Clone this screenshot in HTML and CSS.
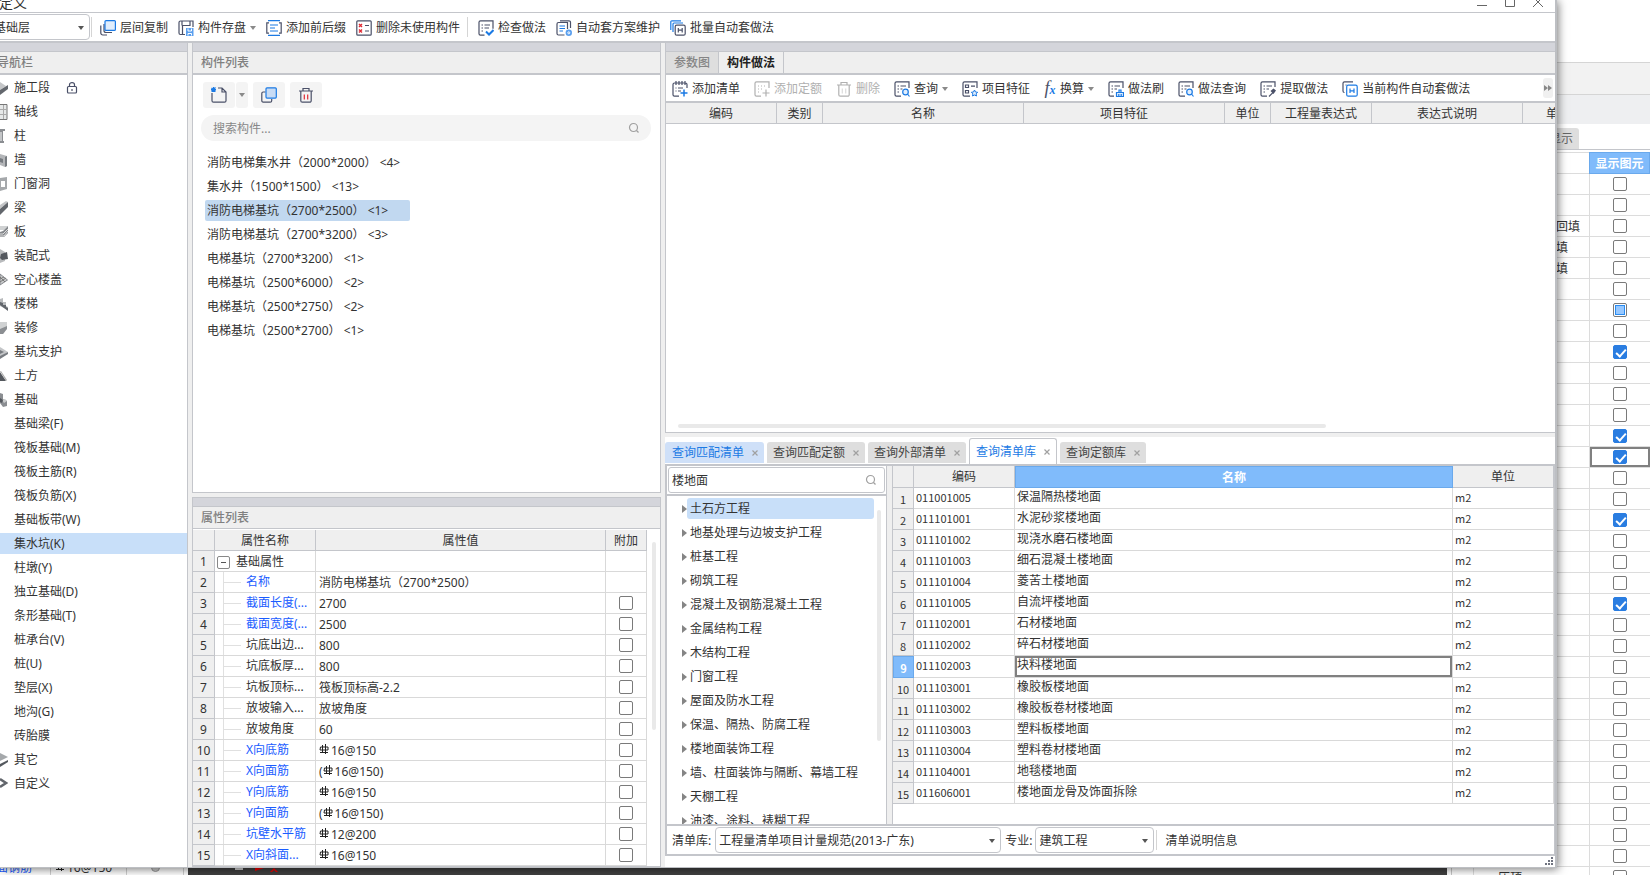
FILE: index.html
```html
<!DOCTYPE html>
<html lang="zh-CN">
<head>
<meta charset="utf-8">
<title>定义</title>
<link rel="stylesheet" href="styles.css">
</head>
<body>
<svg class="sprite" aria-hidden="true">
  <symbol id="i-layers" viewBox="0 0 16 16"><path class="d" d="M4 4v6.500a2 2 0 0 0 2 2h6M.8 5.500v7.500a2 2 0 0 0 2 2H7"/><rect class="b lf" x="5" y=".6" width="10.400" height="9.800" rx="1"/></symbol>
  <symbol id="i-save" viewBox="0 0 16 16"><path class="d" d="M7 14.500H2.500a1.500 1.500 0 0 1-1.500-1.500V2.500A1.500 1.500 0 0 1 2.500 1H15v6M4 1v4.500M4.500 5.500h7.500V1M4.500 5.500V14"/><path class="bf" d="M8 8h7.500v8H8z"/><path class="w" d="M10 8.500v2.500h3.500V8.500M10 15.500v-2h3.500v2"/></symbol>
  <symbol id="i-prefix" viewBox="0 0 16 16"><path class="b" d="M2 .6h12M2 15.400h12M4 5h8M4 8h5M4 11h8"/><path class="d" d="M3 2.800H.8v10.400H3M13 2.800h2.200v10.400H13"/></symbol>
  <symbol id="i-purge" viewBox="0 0 16 16"><rect class="d" x=".8" y=".8" width="14.400" height="14.400" rx="1"/><path class="r" d="M3 4l3 3M6 4L3 7M3 9.500l3 3M6 9.500l-3 3"/><path class="d" d="M9 5.500h4M9 11h4"/></symbol>
  <symbol id="i-check" viewBox="0 0 16 16"><path class="d" d="M6.500 15.200H2.500a1.500 1.500 0 0 1-1.500-1.500V2.300A1.500 1.500 0 0 1 2.500.8H15v8M3.500 5h1.500M6.500 5H12M3.500 8h1.500M6.500 8H11M3.500 11h1.500"/><path class="b2" d="M8 11.500l3 3 4.500-4.500"/></symbol>
  <symbol id="i-scheme" viewBox="0 0 16 16"><path class="d" d="M8.500 15H2.500a1.500 1.500 0 0 1-1.500-1.500V4a1.500 1.500 0 0 1 1.500-1.500H11.500V9M4 .8h9a1.500 1.500 0 0 1 1.500 1.500V8"/><path class="b" d="M3.500 6h5.500M3.500 8.500h5.500M3.500 11h3.500"/><circle class="bf" cx="12.800" cy="12.800" r="3.200"/><circle class="w" cx="12.800" cy="12.800" r="1"/></symbol>
  <symbol id="i-batch" viewBox="0 0 16 16"><path class="b" d="M.8 10V1.800a1 1 0 0 1 1-1H11M3 12V4a1 1 0 0 1 1-1h9"/><rect class="d" x="5.200" y="5.200" width="10" height="10" rx="1.500"/><path class="d" d="M8.300 8v4.500M12.200 8v4.500M8.300 10.200h4"/></symbol>
  <symbol id="i-auto" viewBox="0 0 16 16"><path class="d" d="M2.500 11.500a1.500 1.500 0 0 1-1.500-1.500V2.300A1.500 1.500 0 0 1 2.500.8H11M3.500 4h1"/><rect class="b" x="4.700" y="4.200" width="10.500" height="11" rx="1.500"/><path class="b" d="M8 7.500v4.500M12 7.500v4.500M8 9.800h4"/></symbol>
  <symbol id="i-addlist" viewBox="0 0 16 16"><path class="c" d="M7 15.200H2.500a1.500 1.500 0 0 1-1.500-1.500V3.500A1.500 1.500 0 0 1 2.500 2H13.500A1.500 1.500 0 0 1 15 3.500V7M4 0v4M7 0v4M10 0v4M13 0v4M3.500 7h1M6 7h5M3.500 10h1M6 10h3"/><path class="plus" d="M8.500 12h7M12 8.500v7"/></symbol>
  <symbol id="i-addquota" viewBox="0 0 16 16"><path class="c" d="M7 15.200H2.500a1.500 1.500 0 0 1-1.500-1.500V2.300A1.500 1.500 0 0 1 2.500.8H15V7M4 5h1M7 5h1M10 5h1M4 8h1M7 8h1M4 11h1M8.500 12h7M12 8.500v7"/></symbol>
  <symbol id="i-trash" viewBox="0 0 16 16"><path class="c" d="M1 4h14M5 4V1.500h6V4M2.800 4v9.700a1.500 1.500 0 0 0 1.500 1.500h7.400a1.500 1.500 0 0 0 1.500-1.500V4"/><path class="bar" d="M6.300 7.500v5M9.700 7.500v5"/></symbol>
  <symbol id="i-query" viewBox="0 0 16 16"><path class="d" d="M7 15.200H2.500a1.500 1.500 0 0 1-1.500-1.500V2.300A1.500 1.500 0 0 1 2.500.8H15V7M3.500 5h1.500M6.500 5H12M3.500 8h1.500M6.500 8H8.500M3.500 11h1.500"/><circle class="b lf" cx="11.500" cy="11" r="2.800"/><path class="b" d="M13.500 13l2 2.500"/></symbol>
  <symbol id="i-feature" viewBox="0 0 16 16"><path class="d" d="M8 15.200H2.500a1.500 1.500 0 0 1-1.500-1.500V2.300A1.500 1.500 0 0 1 2.500.8H15V7M3.500 4h3v2.500h-3zM3.500 9.500h3V12h-3zM9 5.200h4"/><path class="b lf thin" d="M12.500 9l1 2 2.200.3-1.600 1.500.4 2.200-2-1-2 1 .4-2.200-1.600-1.500 2.200-.3z"/></symbol>
  <symbol id="i-brush" viewBox="0 0 16 16"><path class="d" d="M6 15.200H2.500a1.500 1.500 0 0 1-1.500-1.500V2.300A1.500 1.500 0 0 1 2.500.8H15V7M3.500 5h1.500M6.500 5H12M3.500 8h1.500M6.500 8H9M3.500 11h1.500"/><path class="b lf" d="M8.500 15.500v-4h7v4zM11 11.500V9h2v2.500M10.800 15v-2M13.200 15v-2"/></symbol>
  <symbol id="i-pick" viewBox="0 0 16 16"><path class="d" d="M7 15.200H2.500a1.500 1.500 0 0 1-1.500-1.500V2.300A1.500 1.500 0 0 1 2.500.8H15V6M3.500 5h1.500M6.500 5H12M3.500 8h1.500M6.500 8H9M3.500 11h1.500M9 15.500l4-4"/><path class="df" d="M10.500 10l3-2.500 2.500 2-2.500 3.500z"/></symbol>
  <symbol id="i-new" viewBox="0 0 16 16"><path class="d" d="M1 6v7.700a1.500 1.500 0 0 0 1.500 1.500h11a1.500 1.500 0 0 0 1.500-1.500V5l-4-4H7M11 1v4h4"/><path class="b" d="M.5 1l4 3.500M4.500.5l-4 4M2.500 0v5M0 2.700h5"/></symbol>
  <symbol id="i-dup" viewBox="0 0 16 16"><path class="d" d="M4.500 5H2.200A1.500 1.500 0 0 0 .8 6.500v7a1.500 1.500 0 0 0 1.400 1.700h7a1.500 1.500 0 0 0 1.500-1.500V12"/><rect class="b mf" x="5" y=".8" width="10.300" height="10.300" rx="1"/></symbol>
  <symbol id="i-search" viewBox="0 0 12 12"><circle class="g" cx="5.500" cy="5.500" r="4"/><path class="g" d="M8.500 8.500l2 2"/></symbol>
  <symbol id="i-lock" viewBox="0 0 12 12"><rect class="d" x="1.500" y="4.500" width="9" height="6.500" rx="1"/><path class="d" d="M3.500 4.500V2.700a2.500 2 0 0 1 5 0v1.800M6 7v2"/></symbol>
  <symbol id="i-rebar" viewBox="0 0 10 11"><path class="k" d="M3.500 1v8M6.500 0v10M1 8.500h8M1.500 3h7.500v3H1z"/></symbol>
  <symbol id="i-x" viewBox="0 0 6 6"><path class="g" d="M.5.5l5 5M5.500.5l-5 5"/></symbol>
</svg>

<div class="app">
  <div class="workspace">
    <div class="dock">
      <div class="dock-name">面钢筋</div>
      <div class="dock-value"><svg class="rebar"><use href="#i-rebar"/></svg>16@150</div>
      <div class="dock-extra"><i></i></div>
    </div>
    <div class="canvas">
      <svg width="60" height="7" viewBox="0 0 60 7"><path fill="#ccc" d="M6 0h8v2H6z"/><path fill="#e00" d="M26 0h9l-9 3zM41 4l4-4 4 4h-2l-2-2-2 2z"/></svg>
    </div>
  </div>
  <aside class="side">
    <div class="side-top"></div>
    <div class="side-bar"></div>
    <div class="side-band"></div>
    <div class="side-tabs"><button type="button">显示</button></div>
    <table class="show-table">
      <colgroup><col><col class="c-show"></colgroup>
      <thead><tr><th></th><th class="hot">显示图元</th></tr></thead>
      <tbody>
        <tr><td></td><td><input type="checkbox" aria-label="显示图元 1"></td></tr>
        <tr><td></td><td><input type="checkbox" aria-label="显示图元 2"></td></tr>
        <tr><td class="t1">回填</td><td><input type="checkbox" aria-label="显示图元 3"></td></tr>
        <tr><td class="t2">填</td><td><input type="checkbox" aria-label="显示图元 4"></td></tr>
        <tr><td class="t2">填</td><td><input type="checkbox" aria-label="显示图元 5"></td></tr>
        <tr><td></td><td><input type="checkbox" aria-label="显示图元 6"></td></tr>
        <tr><td></td><td><input type="checkbox" class="partial" aria-label="显示图元 7"></td></tr>
        <tr><td></td><td><input type="checkbox" aria-label="显示图元 8"></td></tr>
        <tr><td></td><td><input type="checkbox" checked aria-label="显示图元 9"></td></tr>
        <tr><td></td><td><input type="checkbox" aria-label="显示图元 10"></td></tr>
        <tr><td></td><td><input type="checkbox" aria-label="显示图元 11"></td></tr>
        <tr><td></td><td><input type="checkbox" aria-label="显示图元 12"></td></tr>
        <tr><td></td><td><input type="checkbox" checked aria-label="显示图元 13"></td></tr>
        <tr><td></td><td class="focus"><input type="checkbox" checked aria-label="显示图元 14"></td></tr>
        <tr><td></td><td><input type="checkbox" aria-label="显示图元 15"></td></tr>
        <tr><td></td><td><input type="checkbox" aria-label="显示图元 16"></td></tr>
        <tr><td></td><td><input type="checkbox" checked aria-label="显示图元 17"></td></tr>
        <tr><td></td><td><input type="checkbox" aria-label="显示图元 18"></td></tr>
        <tr><td></td><td><input type="checkbox" aria-label="显示图元 19"></td></tr>
        <tr><td></td><td><input type="checkbox" aria-label="显示图元 20"></td></tr>
        <tr><td></td><td><input type="checkbox" checked aria-label="显示图元 21"></td></tr>
        <tr><td></td><td><input type="checkbox" aria-label="显示图元 22"></td></tr>
        <tr><td></td><td><input type="checkbox" aria-label="显示图元 23"></td></tr>
        <tr><td></td><td><input type="checkbox" aria-label="显示图元 24"></td></tr>
        <tr><td></td><td><input type="checkbox" aria-label="显示图元 25"></td></tr>
        <tr><td></td><td><input type="checkbox" aria-label="显示图元 26"></td></tr>
        <tr><td></td><td><input type="checkbox" aria-label="显示图元 27"></td></tr>
        <tr><td></td><td><input type="checkbox" aria-label="显示图元 28"></td></tr>
        <tr><td></td><td><input type="checkbox" aria-label="显示图元 29"></td></tr>
        <tr><td></td><td><input type="checkbox" aria-label="显示图元 30"></td></tr>
        <tr><td></td><td><input type="checkbox" aria-label="显示图元 31"></td></tr>
        <tr><td></td><td><input type="checkbox" aria-label="显示图元 32"></td></tr>
        <tr><td></td><td><input type="checkbox" aria-label="显示图元 33"></td></tr>
        <tr><td class="t3">压顶</td><td><input type="checkbox" aria-label="显示图元 34"></td></tr>
      </tbody>
    </table>
  </aside>
</div>

<main class="dialog">
  <header class="titlebar">
    <div class="title-row">
      <span class="title">定义</span>
      <div class="win-btns">
        <button type="button" aria-label="最小化"><svg width="10" height="10"><path class="wb" d="M0 8.500h10"/></svg></button>
        <button type="button" aria-label="最大化"><svg width="10" height="10"><path class="wb" d="M.5.5h9v9h-9z"/></svg></button>
        <button type="button" aria-label="关闭"><svg width="10" height="10"><path class="wb" d="M0 0l10 10M10 0L0 10"/></svg></button>
      </div>
    </div>
  </header>

  <div class="toolbar main-tools">
    <div class="select floor"><select aria-label="楼层"><option>基础层</option></select></div>
    <i class="sep"></i>
    <button type="button"><svg class="ic"><use href="#i-layers"/></svg>层间复制</button>
    <button type="button"><svg class="ic"><use href="#i-save"/></svg>构件存盘<i class="caret"></i></button>
    <button type="button"><svg class="ic"><use href="#i-prefix"/></svg>添加前后缀</button>
    <button type="button"><svg class="ic"><use href="#i-purge"/></svg>删除未使用构件</button>
    <i class="sep mid"></i>
    <button type="button"><svg class="ic"><use href="#i-check"/></svg>检查做法</button>
    <button type="button"><svg class="ic"><use href="#i-scheme"/></svg>自动套方案维护</button>
    <button type="button"><svg class="ic"><use href="#i-batch"/></svg>批量自动套做法</button>
  </div>

  <div class="panes">
    <nav class="panel nav">
      <div class="strip"></div>
      <h2 class="head">导航栏</h2>
      <ul class="nav-list">
        <li><a href="#"><svg class="ni" viewBox="0 0 8 16"><path fill="#c4c6c8" d="M0 2l6 4-6 4z"/><path fill="#63676d" d="M0 10l8-5v4l-8 6z"/></svg>施工段<svg class="lock"><use href="#i-lock"/></svg></a></li>
        <li><a href="#"><svg class="ni" viewBox="0 0 8 16"><path fill="#e6e8e8" stroke="#777" d="M-1 .5h8v15h-8z"/><path stroke="#aaa" d="M3.500 1v14M0 5.500h7M0 10.500h7"/></svg>轴线</a></li>
        <li><a href="#"><svg class="ni" viewBox="0 0 8 16"><path fill="#8b8e92" d="M0 1h5v2H3v10h1v2H0z"/><path fill="#c4c6c8" d="M0 4h2v9H0z"/></svg>柱</a></li>
        <li><a href="#"><svg class="ni" viewBox="0 0 8 16"><path fill="#b4b6b9" d="M0 2l7 2v10l-2 1-5-2z"/><path fill="#777b80" d="M5 5l2-1v10l-2 1zM0 6l3 1v4l-3-1z"/></svg>墙</a></li>
        <li><a href="#"><svg class="ni" viewBox="0 0 8 16"><path fill="#a5a8ab" d="M0 2l7-1v12l-7 2z"/><path fill="#fff" d="M1 5h4v6H1z"/></svg>门窗洞</a></li>
        <li><a href="#"><svg class="ni" viewBox="0 0 8 16"><path fill="#c4c6c8" d="M0 5l6-4 2 1-8 7z"/><path fill="#62666c" d="M0 9l8-7v5l-8 8z"/></svg>梁</a></li>
        <li><a href="#"><svg class="ni" viewBox="0 0 8 16"><path fill="#d0d2d3" d="M0 2h8L4 6H0z"/><path fill="#85888c" d="M0 8l3-1 5-5v7l-4 4H0z"/><path stroke="#ddd" fill="none" d="M0 10h3l5-5M0 12h4l4-5"/></svg>板</a></li>
        <li><a href="#"><svg class="ni" viewBox="0 0 8 16"><path fill="#b9bbbd" d="M0 1l5 3v9l-5 2z"/><path fill="#54585e" d="M1 6l6-2 1 7-6 1-2-2z"/></svg>装配式</a></li>
        <li><a href="#"><svg class="ni" viewBox="0 0 8 16"><path fill="#c9cbcc" stroke="#85888c" d="M0 2l7.500 6L0 13z"/><path stroke="#777" d="M0 7l4-2M0 10l6-4M0 5l5 5"/></svg>空心楼盖</a></li>
        <li><a href="#"><svg class="ni" viewBox="0 0 8 16"><path fill="#b9bbbd" d="M0 3l3-1v4l3 0v4l2 1v3l-8-4z"/><path fill="#62666c" d="M0 6l3 1v2l3 0v2l2 1v3L0 9z"/></svg>楼梯</a></li>
        <li><a href="#"><svg class="ni" viewBox="0 0 8 16"><path fill="#d0d2d3" d="M0 2h7v6l-4 6H0z"/><path fill="#8b8e92" d="M0 9l7-3v3l-4 5H0z"/></svg>装修</a></li>
        <li><a href="#"><svg class="ni" viewBox="0 0 8 16"><path fill="#c4c6c8" d="M0 3l8 5-8 5z"/><path fill="#777b80" d="M0 6l4 2-4 2zM0 12l8-4v2l-8 5z"/></svg>基坑支护</a></li>
        <li><a href="#"><svg class="ni" viewBox="0 0 8 16"><path fill="#54585e" d="M0 4l6 9H0z"/><path fill="#aaa" d="M0 3l1 0 6 9-1 1z"/></svg>土方</a></li>
        <li><a href="#"><svg class="ni" viewBox="0 0 8 16"><path fill="#8b8e92" d="M0 1l3 1v5l4 2v5l-4 1-3-4z"/><path fill="#c9cbcc" d="M2 8l3-1 2 2-3 2z"/><path fill="#54585e" d="M0 6l3 2-1 3-2-1z"/></svg>基础</a></li>
        <li><a href="#">基础梁(F)</a></li>
        <li><a href="#">筏板基础(M)</a></li>
        <li><a href="#">筏板主筋(R)</a></li>
        <li><a href="#">筏板负筋(X)</a></li>
        <li><a href="#">基础板带(W)</a></li>
        <li><a href="#" class="on" aria-current="page">集水坑(K)</a></li>
        <li><a href="#">柱墩(Y)</a></li>
        <li><a href="#">独立基础(D)</a></li>
        <li><a href="#">条形基础(T)</a></li>
        <li><a href="#">桩承台(V)</a></li>
        <li><a href="#">桩(U)</a></li>
        <li><a href="#">垫层(X)</a></li>
        <li><a href="#">地沟(G)</a></li>
        <li><a href="#">砖胎膜</a></li>
        <li><a href="#"><svg class="ni" viewBox="0 0 8 16"><path fill="#a5a8ab" d="M0 1l8 4-8 4z"/><path fill="#54585e" d="M0 12l8-4v2l-8 5z"/></svg>其它</a></li>
        <li><a href="#"><svg class="ni" viewBox="0 0 8 16"><path fill="none" stroke="#62666c" stroke-width="2.500" d="M0 3l6 4-6 4"/></svg>自定义</a></li>
      </ul>
    </nav>

    <div class="middle">
      <section class="panel comp">
        <div class="strip"></div>
        <h2 class="head">构件列表</h2>
        <div class="comp-tools">
          <div class="split">
            <button type="button" aria-label="新建"><svg class="ic"><use href="#i-new"/></svg></button>
            <button type="button" class="drop" aria-label="新建选项"><i class="caret"></i></button>
          </div>
          <button type="button" aria-label="复制"><svg class="ic"><use href="#i-dup"/></svg></button>
          <button type="button" aria-label="删除"><svg class="ic red"><use href="#i-trash"/></svg></button>
        </div>
        <label class="search pill"><input type="text" placeholder="搜索构件..." aria-label="搜索构件"><svg class="mag"><use href="#i-search"/></svg></label>
        <ul class="comp-list">
          <li>消防电梯集水井（2000*2000） &lt;4&gt;</li>
          <li>集水井（1500*1500） &lt;13&gt;</li>
          <li class="on">消防电梯基坑（2700*2500） &lt;1&gt;</li>
          <li>消防电梯基坑（2700*3200） &lt;3&gt;</li>
          <li>电梯基坑（2700*3200） &lt;1&gt;</li>
          <li>电梯基坑（2500*6000） &lt;2&gt;</li>
          <li>电梯基坑（2500*2750） &lt;2&gt;</li>
          <li>电梯基坑（2500*2700） &lt;1&gt;</li>
        </ul>
      </section>

      <section class="panel props">
        <div class="strip lined"></div>
        <h2 class="head thin">属性列表</h2>
        <div class="props-body">
          <table class="grid prop-table">
            <colgroup><col class="c-no"><col class="c-name"><col><col class="c-add"></colgroup>
            <thead><tr><th></th><th>属性名称</th><th>属性值</th><th>附加</th></tr></thead>
            <tbody>
              <tr><th>1</th><td class="group"><button type="button" aria-label="折叠"></button>基础属性</td><td></td><td></td></tr>
              <tr><th>2</th><td class="leaf blue">名称</td><td>消防电梯基坑（2700*2500）</td><td></td></tr>
              <tr><th>3</th><td class="leaf blue">截面长度(...</td><td>2700</td><td><input type="checkbox" aria-label="附加 3"></td></tr>
              <tr><th>4</th><td class="leaf blue">截面宽度(...</td><td>2500</td><td><input type="checkbox" aria-label="附加 4"></td></tr>
              <tr><th>5</th><td class="leaf">坑底出边...</td><td>800</td><td><input type="checkbox" aria-label="附加 5"></td></tr>
              <tr><th>6</th><td class="leaf">坑底板厚...</td><td>800</td><td><input type="checkbox" aria-label="附加 6"></td></tr>
              <tr><th>7</th><td class="leaf">坑板顶标...</td><td>筏板顶标高-2.2</td><td><input type="checkbox" aria-label="附加 7"></td></tr>
              <tr><th>8</th><td class="leaf">放坡输入...</td><td>放坡角度</td><td><input type="checkbox" aria-label="附加 8"></td></tr>
              <tr><th>9</th><td class="leaf">放坡角度</td><td>60</td><td><input type="checkbox" aria-label="附加 9"></td></tr>
              <tr><th>10</th><td class="leaf blue">X向底筋</td><td><svg class="rebar"><use href="#i-rebar"/></svg>16@150</td><td><input type="checkbox" aria-label="附加 10"></td></tr>
              <tr><th>11</th><td class="leaf blue">X向面筋</td><td>(<svg class="rebar"><use href="#i-rebar"/></svg>16@150)</td><td><input type="checkbox" aria-label="附加 11"></td></tr>
              <tr><th>12</th><td class="leaf blue">Y向底筋</td><td><svg class="rebar"><use href="#i-rebar"/></svg>16@150</td><td><input type="checkbox" aria-label="附加 12"></td></tr>
              <tr><th>13</th><td class="leaf blue">Y向面筋</td><td>(<svg class="rebar"><use href="#i-rebar"/></svg>16@150)</td><td><input type="checkbox" aria-label="附加 13"></td></tr>
              <tr><th>14</th><td class="leaf blue">坑壁水平筋</td><td><svg class="rebar"><use href="#i-rebar"/></svg>12@200</td><td><input type="checkbox" aria-label="附加 14"></td></tr>
              <tr><th>15</th><td class="leaf blue">X向斜面...</td><td><svg class="rebar"><use href="#i-rebar"/></svg>16@150</td><td><input type="checkbox" aria-label="附加 15"></td></tr>
            </tbody>
          </table>
          <div class="track"><i></i></div>
        </div>
      </section>
    </div>

    <div class="right">
      <section class="panel method">
        <div class="strip"></div>
        <div class="head tabs-top">
          <button type="button">参数图</button><button type="button" class="on">构件做法</button>
        </div>
        <div class="toolbar method-tools">
          <button type="button"><svg class="ic"><use href="#i-addlist"/></svg>添加清单</button>
          <button type="button" disabled><svg class="ic"><use href="#i-addquota"/></svg>添加定额</button>
          <button type="button" disabled><svg class="ic"><use href="#i-trash"/></svg>删除</button>
          <button type="button"><svg class="ic"><use href="#i-query"/></svg>查询<i class="caret"></i></button>
          <button type="button"><svg class="ic"><use href="#i-feature"/></svg>项目特征</button>
          <button type="button"><span class="fx" aria-hidden="true">f<b>x</b></span>换算<i class="caret"></i></button>
          <button type="button"><svg class="ic"><use href="#i-brush"/></svg>做法刷</button>
          <button type="button"><svg class="ic"><use href="#i-query"/></svg>做法查询</button>
          <button type="button"><svg class="ic"><use href="#i-pick"/></svg>提取做法</button>
          <button type="button"><svg class="ic"><use href="#i-auto"/></svg>当前构件自动套做法</button>
          <button type="button" class="more" aria-label="更多"><svg width="8" height="6"><path fill="#888" d="M0 0l4 3-4 3zM4 0l4 3-4 3z"/></svg></button>
        </div>
        <div class="method-body">
          <table class="grid method-table">
            <colgroup><col class="m1"><col class="m2"><col class="m3"><col class="m3"><col class="m2"><col class="m4"><col class="m5"><col class="m6"></colgroup>
            <thead><tr><th>编码</th><th>类别</th><th>名称</th><th>项目特征</th><th>单位</th><th>工程量表达式</th><th>表达式说明</th><th>单价</th></tr></thead>
          </table>
          <div class="hbar"></div>
        </div>
      </section>

      <section class="query">
        <div class="tabs">
          <button type="button" class="tint">查询匹配清单<svg class="x"><use href="#i-x"/></svg></button>
          <button type="button">查询匹配定额<svg class="x"><use href="#i-x"/></svg></button>
          <button type="button">查询外部清单<svg class="x"><use href="#i-x"/></svg></button>
          <button type="button" class="on">查询清单库<svg class="x"><use href="#i-x"/></svg></button>
          <button type="button">查询定额库<svg class="x"><use href="#i-x"/></svg></button>
        </div>
        <div class="query-body">
          <div class="tree-pane">
            <div class="tree-search"><label class="search box"><input type="text" value="楼地面" aria-label="搜索清单"><svg class="mag"><use href="#i-search"/></svg></label></div>
            <div class="tree">
              <ul>
                <li class="on"><span>土石方工程</span></li>
                <li><span>地基处理与边坡支护工程</span></li>
                <li><span>桩基工程</span></li>
                <li><span>砌筑工程</span></li>
                <li><span>混凝土及钢筋混凝土工程</span></li>
                <li><span>金属结构工程</span></li>
                <li><span>木结构工程</span></li>
                <li><span>门窗工程</span></li>
                <li><span>屋面及防水工程</span></li>
                <li><span>保温、隔热、防腐工程</span></li>
                <li><span>楼地面装饰工程</span></li>
                <li><span>墙、柱面装饰与隔断、幕墙工程</span></li>
                <li><span>天棚工程</span></li>
                <li><span>油漆、涂料、裱糊工程</span></li>
              </ul>
              <div class="track"><i></i></div>
            </div>
          </div>
          <div class="list-pane">
            <table class="grid list-table">
              <colgroup><col class="q1"><col class="q2"><col><col class="q2"></colgroup>
              <thead><tr><th></th><th>编码</th><th class="hot">名称</th><th>单位</th></tr></thead>
              <tbody>
                <tr><th>1</th><td class="code">011001005</td><td>保温隔热楼地面</td><td class="code">m2</td></tr>
                <tr><th>2</th><td class="code">011101001</td><td>水泥砂浆楼地面</td><td class="code">m2</td></tr>
                <tr><th>3</th><td class="code">011101002</td><td>现浇水磨石楼地面</td><td class="code">m2</td></tr>
                <tr><th>4</th><td class="code">011101003</td><td>细石混凝土楼地面</td><td class="code">m2</td></tr>
                <tr><th>5</th><td class="code">011101004</td><td>菱苦土楼地面</td><td class="code">m2</td></tr>
                <tr><th>6</th><td class="code">011101005</td><td>自流坪楼地面</td><td class="code">m2</td></tr>
                <tr><th>7</th><td class="code">011102001</td><td>石材楼地面</td><td class="code">m2</td></tr>
                <tr><th>8</th><td class="code">011102002</td><td>碎石材楼地面</td><td class="code">m2</td></tr>
                <tr><th class="hot">9</th><td class="code">011102003</td><td class="focus">块料楼地面</td><td class="code">m2</td></tr>
                <tr><th>10</th><td class="code">011103001</td><td>橡胶板楼地面</td><td class="code">m2</td></tr>
                <tr><th>11</th><td class="code">011103002</td><td>橡胶板卷材楼地面</td><td class="code">m2</td></tr>
                <tr><th>12</th><td class="code">011103003</td><td>塑料板楼地面</td><td class="code">m2</td></tr>
                <tr><th>13</th><td class="code">011103004</td><td>塑料卷材楼地面</td><td class="code">m2</td></tr>
                <tr><th>14</th><td class="code">011104001</td><td>地毯楼地面</td><td class="code">m2</td></tr>
                <tr><th>15</th><td class="code">011606001</td><td>楼地面龙骨及饰面拆除</td><td class="code">m2</td></tr>
              </tbody>
            </table>
          </div>
        </div>
        <div class="query-foot">
          <label for="lib">清单库:</label>
          <div class="select lib"><select id="lib"><option>工程量清单项目计量规范(2013-广东)</option></select></div>
          <label for="major">专业:</label>
          <div class="select major"><select id="major"><option>建筑工程</option></select></div>
          <i class="sep"></i>
          <span class="info">清单说明信息</span>
        </div>
        <div class="status"><svg width="8" height="8"><path fill="#707480" d="M6 0h2v2H6zM3 3h2v2H3zM6 3h2v2H6zM0 6h2v2H0zM3 6h2v2H3zM6 6h2v2H6z"/></svg></div>
      </section>
    </div>
  </div>
</main>
</body>
</html>
```
FILE: styles.css
```css
* { box-sizing: border-box; }

:root {
  --line: #c4c6cb;
  --cell: #d9d9d9;
  --head: #efefef;
  --strip: #d4d5db;
  --hot: #80bbfb;
  --blue: #1b7ae4;
}

body {
  margin: 0;
  height: 100vh;
  overflow: hidden;
  position: relative;
  background: #fff;
  color: #333;
  font: 12px/20px "Noto Sans", "Noto Sans CJK SC", sans-serif;
}

button, input, select { font: inherit; color: inherit; }
button { border: 0; background: none; padding: 0; white-space: nowrap; }
ul { list-style: none; margin: 0; padding: 0; }
a { color: inherit; text-decoration: none; }
h2 { margin: 0; font-size: 12px; font-weight: 400; }
i { font-style: normal; }

/* icon strokes */
.sprite { position: absolute; width: 0; height: 0; }
.d, .b, .b2, .r, .w, .g, .c, .k, .plus, .bar, .wb { fill: none; stroke-width: 1.2; }
.d { stroke: #4a5068; }
.df { fill: #4a5068; }
.b { stroke: var(--blue); }
.b2 { stroke: var(--blue); stroke-width: 2; }
.bf { fill: #5a9fee; }
.lf { fill: #e1eefd; }
.mf { fill: #c8dcf5; }
.thin { stroke-width: 1; }
.r { stroke: #e02a34; stroke-width: 1.4; }
.w { stroke: #fff; stroke-width: 1; }
.g { stroke: #a0a0a0; }
.k { stroke: #222; stroke-width: 1; }
.wb { stroke: #666; stroke-width: 1; }
.c { stroke: #4a5068; }
.plus { stroke: var(--blue); stroke-width: 1.5; }
.bar { stroke: currentColor; }
:disabled .ic { filter: grayscale(1) opacity(.45); }
.ic { width: 16px; height: 16px; flex: none; }
.ic.red { color: #e02a34; }
.rebar { width: 10px; height: 11px; margin-right: 2px; vertical-align: 0; }
.caret { width: 0; height: 0; border: 3px solid transparent; border-top: 4px solid #8a8a8a; border-bottom: 0; }
.sep { width: 1px; height: 20px; background: #d5d5d5; flex: none; }

input[type="checkbox"] {
  appearance: none;
  display: block;
  position: relative;
  width: 14px;
  height: 14px;
  margin: 0 auto;
  border: 1px solid #7a7a7a;
  border-radius: 2px;
  background: #fff;
}
input[type="checkbox"]:checked { background: #2a7de1; border-color: #2a7de1; }
input[type="checkbox"]:checked::after {
  content: "";
  position: absolute;
  left: 4px;
  top: 1px;
  width: 4px;
  height: 8px;
  border: solid #fff;
  border-width: 0 2px 2px 0;
  transform: rotate(42deg);
}
input.partial::after {
  content: "";
  position: absolute;
  inset: 1px;
  background: #97c8ff;
  border: 1px solid #2a8cf0;
}

/* window behind */
.app { display: flex; height: 100vh; overflow: hidden; }
.workspace { flex: 1; display: flex; align-items: stretch; min-width: 0; }
.dock { width: 188px; display: flex; align-items: flex-end; line-height: 14px; }
.dock > div { height: 14px; border-right: 1px solid #d0d0d0; }
.dock-name { width: 56px; margin-left: -5px; color: #1a5cff; padding-left: 1px; flex: none; }
.dock-value { width: 76px; padding-left: 4px; }
.dock-extra { width: 57px; }
.dock-extra i { display: block; width: 9px; height: 9px; margin: 2px auto 0; border: 1px solid #999; border-radius: 5px; background: #ccc; }
.canvas { flex: 1; margin-right: 4px; background: #404040; display: flex; align-items: flex-end; padding-left: 41px; }
.side { width: 199px; flex: none; overflow: hidden; border-left: 1px solid #c8c8c8; display: flex; flex-direction: column; }
.side-top { height: 62px; flex: none; }
.side-bar { height: 32px; flex: none; background: #f2f2f2; border-top: 1px solid #d5d5d5; }
.side-band { height: 30px; flex: none; background: #eeeff1; border-top: 1px solid #d5d5d5; }
.side-tabs { height: 26px; flex: none; padding: 4px 71px 0 0; display: flex; justify-content: flex-end; border-bottom: 1px solid var(--line); }
.side-tabs button { padding: 0 6px; background: #dedede; border-radius: 3px 3px 0 0; color: #666; }
.show-table { table-layout: fixed; border-spacing: 0; width: calc(100% - 21px); margin: 2px 0 0 21px; border-left: 1px solid #ddd; }
.c-show { width: 61px; }
.show-table th, .show-table td { height: 21px; padding: 2px 0 0; border-bottom: 1px solid #dcdcdc; line-height: 18px; }
.show-table th { border-top: 1px solid #dcdcdc; height: 22px; }
.show-table td + td { border-left: 1px solid #dcdcdc; padding: 0; }
.show-table .t1 { text-align: right; padding-right: 9px; }
.show-table .t2 { text-align: right; padding-right: 21px; }
.show-table .t3 { padding-left: 24px; }
.show-table .focus { box-shadow: inset 0 0 0 2px #808080; }
th.hot, .grid th.hot { background: var(--hot); color: #fff; font-weight: 700; border: 1px solid #6aa9ec; }

/* dialog window over it */
.dialog {
  position: absolute;
  inset: 0 93px 7px 0;
  display: flex;
  flex-direction: column;
  background: #fff;
  border: solid #bdbfc3;
  border-width: 0 2px 1px 0;
  box-shadow: 1px 1px 9px rgba(0, 0, 0, .55);
}
.titlebar { height: 13px; flex: none; overflow: hidden; border-bottom: 1px solid var(--line); }
.title-row { display: flex; justify-content: space-between; align-items: center; height: 20px; margin-top: -7px; }
.title { font-size: 14px; margin-left: -1px; }
.win-btns { display: flex; gap: 18px; padding: 0 12px 2px 0; }
.win-btns svg { display: block; }

.toolbar { display: flex; align-items: center; flex: none; }
.toolbar button { display: flex; align-items: center; gap: 4px; line-height: 20px; }
.toolbar button:disabled { color: #b0b0b0; }
.main-tools { height: 30px; gap: 10px; border-bottom: 2px solid var(--line); }
.main-tools button { padding-top: 2px; }
.main-tools .sep { margin: 0 -2px 0 -9px; }
.main-tools .sep.mid { margin: 0 0 0 -3px; }

.select { position: relative; border: 1px solid var(--line); border-radius: 4px; height: 26px; background: #fff; }
.select select { appearance: none; border: 0; background: none; width: 100%; height: 100%; padding: 2px 16px 0 3px; outline: 0; }
.select::after { content: ""; position: absolute; right: 5px; top: 11px; border: 3px solid transparent; border-top: 4px solid #555; border-bottom: 0; pointer-events: none; }
.floor { width: 100px; margin-left: -10px; }

.panes { flex: 1; min-height: 0; display: grid; grid-template-columns: 188px 469px minmax(0, 1fr); gap: 4px; background: var(--head); }
.panel { background: #fff; border: 1px solid var(--line); border-width: 0 1px; display: flex; flex-direction: column; min-height: 0; min-width: 0; overflow: hidden; }
.strip { height: 9px; flex: none; background: var(--strip); border-bottom: 1px solid var(--line); }
.strip.lined { height: 10px; border-top: 1px solid var(--line); }
.head { height: 23px; flex: none; background: var(--head); border-bottom: 2px solid var(--line); padding-left: 8px; line-height: 22px; color: #808080; font-weight: 500; }
.head.thin { height: 22px; border-bottom-width: 1px; }

.nav { border-left: 0; }
.nav .head { padding-left: 0; text-indent: -3px; }
.nav-list { padding-top: 2px; }
.nav-list a { display: flex; align-items: center; height: 21px; margin-bottom: 3px; padding-left: 14px; }
.nav-list .on { background: #c8dff9; }
.ni { width: 8px; height: 16px; margin: 0 6px 0 -14px; flex: none; }
.lock { width: 12px; height: 12px; margin-left: 16px; }

.middle { display: grid; grid-template-rows: 45fr 37fr; gap: 4px; min-height: 0; }
.comp { border-bottom-width: 1px; }
.comp-tools { display: flex; gap: 5px; padding: 7px 10px; }
.comp-tools button { width: 32px; height: 26px; background: #f4f4f4; border-radius: 3px; display: flex; align-items: center; justify-content: center; }
.comp-tools .drop { width: 12px; }
.split { display: flex; gap: 1px; }
.search { display: flex; align-items: center; height: 26px; }
.search input { flex: 1; min-width: 0; border: 0; background: none; outline: 0; padding: 2px 0 0; }
.search input::placeholder { color: #888; opacity: 1; }
.mag { width: 12px; height: 12px; flex: none; }
.pill { margin: 0 9px 0 8px; padding: 0 11px 0 12px; border-radius: 13px; background: #f4f4f4; }
.comp-list { padding: 11px 0 0 12px; }
.comp-list li { width: 205px; height: 21px; margin-bottom: 3px; padding-left: 2px; border-radius: 2px; line-height: 22px; white-space: pre; }
.comp-list .on { background: #c1d8f0; }

.grid { table-layout: fixed; border-spacing: 0; }
.grid th, .grid td { height: 21px; padding: 2px 0 0; border: solid var(--cell); border-width: 0 1px 1px 0; line-height: 18px; vertical-align: top; text-align: left; white-space: nowrap; overflow: hidden; }
.grid th { background: var(--head); font-weight: 400; border-color: var(--line); text-align: center; }
.props { border-bottom-width: 1px; }
.props-body { display: flex; padding-top: 1px; min-height: 0; }
.prop-table { flex: 1; width: 0; }
.prop-table td:nth-child(3) { padding-left: 3px; }
.prop-table td:nth-child(4) { padding-top: 3px; }
.c-no { width: 22px; }
.c-name { width: 101px; }
.c-add { width: 41px; }
.track { width: 13px; flex: none; }
.track i { display: block; width: 4px; height: 56%; margin: 12px auto 0 5px; border-radius: 2px; background: #e9e9e9; }
.prop-table .group button { display: inline-block; width: 13px; height: 13px; margin: 0 6px 0 2px; border: 1px solid #888; border-radius: 2px; vertical-align: -2px; background: linear-gradient(#555, #555) center / 5px 1px no-repeat; }
.prop-table .leaf { padding: 0 0 0 8px; line-height: 20px; }
.leaf::before { content: ""; display: inline-block; width: 17px; height: 20px; margin-right: 5px; border-left: 1px solid #e0e0e0; background: linear-gradient(#e0e0e0, #e0e0e0) center / 100% 1px no-repeat; vertical-align: top; }
.blue { color: #1a5cff; }

.right { display: grid; grid-template-rows: 39fr 43fr; gap: 4px; min-height: 0; min-width: 0; }
.method { border-width: 0 0 1px 1px; }
.tabs-top { display: flex; padding-left: 0; }
.tabs-top button { padding: 0 8px; border-right: 1px solid var(--line); background: #dedede; color: #858585; }
.tabs-top .on { background: var(--head); color: #222; font-weight: 700; }
.method-tools { height: 28px; padding: 0 2px 0 6px; gap: 14px; border-bottom: 2px solid var(--line); }
.method-tools button { padding-top: 2px; }
.toolbar .more { margin-left: auto; width: 10px; height: 20px; padding: 0; justify-content: center; background: #f0f0f0; border-radius: 3px; }
.more svg { flex: none; }
.fx { width: 12px; font: italic 400 18px/16px "Liberation Serif", serif; color: #4a5068; }
.fx b { font-size: 12px; color: var(--blue); }
.method-body { flex: 1; display: flex; flex-direction: column; justify-content: space-between; overflow: hidden; }
.method-table { width: 928px; }
.m1 { width: 111px; } .m2 { width: 46px; } .m3 { width: 201px; } .m4 { width: 101px; } .m5 { width: 151px; } .m6 { width: 71px; }
.hbar { height: 4px; margin: 0 229px 4px 12px; border-radius: 2px; background: #e9e9e9; }

.query { display: flex; flex-direction: column; background: #fff; min-height: 0; min-width: 0; }
.tabs { display: flex; align-items: flex-end; gap: 3px; height: 29px; flex: none; border-bottom: 2px solid var(--line); }
.tabs button { display: flex; align-items: center; gap: 8px; height: 21px; margin-bottom: 1px; padding: 1px 6px 0; background: #dedede; border-radius: 3px 3px 0 0; color: #444; }
.tabs .tint { padding-left: 7px; background: #cfe0f8; color: var(--blue); }
.tabs .on { height: 26px; margin-bottom: 0; padding: 0 6px; background: #fff; border: 1px solid var(--line); border-bottom: 0; color: var(--blue); }
.x { width: 6px; height: 6px; }
.query-body { flex: 1; min-height: 0; display: grid; grid-template-columns: 220px minmax(0, 1fr); gap: 5px; background: var(--head); border: solid var(--line); border-width: 0 1px 2px 2px; }
.tree-pane { display: flex; flex-direction: column; min-height: 0; background: #fff; border-right: 1px solid var(--line); }
.tree-search { padding: 1px; border-bottom: 2px solid var(--line); }
.box { border: 1px solid var(--line); border-radius: 3px; padding: 0 7px 0 3px; }
.tree { flex: 1; display: flex; overflow: hidden; padding-top: 2px; }
.tree ul { flex: 1; padding-left: 15px; }
.tree li { display: flex; align-items: center; height: 21px; margin-bottom: 3px; white-space: nowrap; }
.tree li::before { content: ""; border: 4px solid transparent; border-left: 5px solid #858585; border-right: 0; }
.tree span { flex: 1; height: 21px; padding-left: 3px; border-radius: 3px; line-height: 22px; }
.tree .on span { background: #c8dff9; }
.tree .track { width: 12px; }
.tree .track i { height: 71%; margin-left: 3px; }
.list-pane { background: #fff; border-left: 1px solid var(--line); overflow: hidden; }
.list-table { width: 100%; }
.q1 { width: 21px; }
.q2 { width: 101px; }
.list-table td { padding: 0 0 0 2px; }
.list-table .code, .list-table tbody th { font-family: "Noto Sans CJK SC", sans-serif; font-size: 11px; }
.grid .focus { box-shadow: inset 0 0 0 2px #808080; }
.query-foot { display: flex; align-items: center; height: 30px; flex: none; padding-left: 5px; border: solid var(--line); border-width: 0 1px 2px 2px; }
.query-foot label, .info { padding-top: 2px; }
.lib { width: 286px; margin: 0 4px 0 4px; }
.major { width: 119px; margin: 0 2px 0 3px; }
.info { margin-left: 8px; }
.status { height: 11px; flex: none; display: flex; justify-content: flex-end; padding: 1px 2px 0 0; }
```
